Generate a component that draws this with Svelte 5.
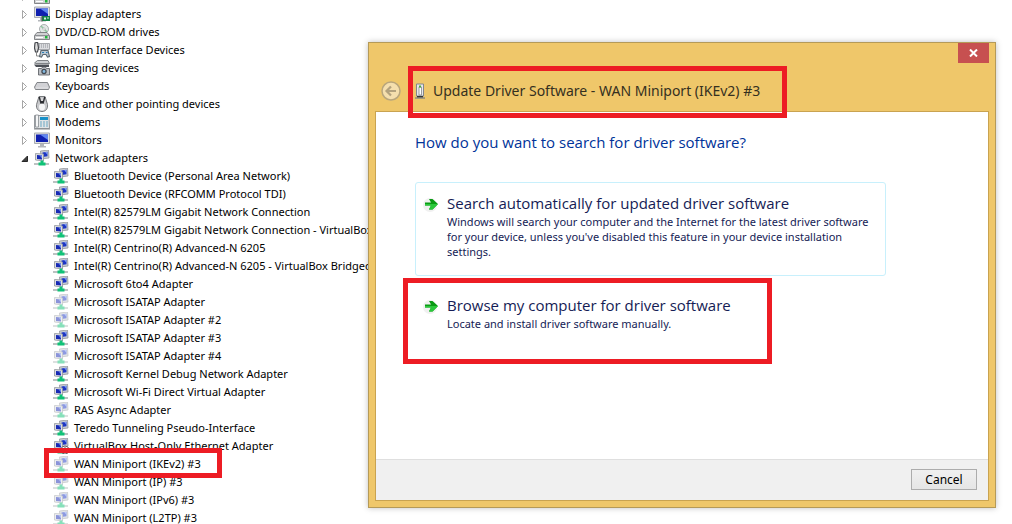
<script>
  const categories = [
    { name: 'Disk drives', icon: 'disk' },
    { name: 'Display adapters', icon: 'display' },
    { name: 'DVD/CD-ROM drives', icon: 'dvd' },
    { name: 'Human Interface Devices', icon: 'hid' },
    { name: 'Imaging devices', icon: 'imaging' },
    { name: 'Keyboards', icon: 'keyboard' },
    { name: 'Mice and other pointing devices', icon: 'mouse' },
    { name: 'Modems', icon: 'modem' },
    { name: 'Monitors', icon: 'monitor' },
    {
      name: 'Network adapters',
      icon: 'network',
      devices: [
        { name: 'Bluetooth Device (Personal Area Network)' },
        { name: 'Bluetooth Device (RFCOMM Protocol TDI)' },
        { name: 'Intel(R) 82579LM Gigabit Network Connection' },
        { name: 'Intel(R) 82579LM Gigabit Network Connection - VirtualBox' },
        { name: 'Intel(R) Centrino(R) Advanced-N 6205' },
        { name: 'Intel(R) Centrino(R) Advanced-N 6205 - VirtualBox Bridged' },
        { name: 'Microsoft 6to4 Adapter' },
        { name: 'Microsoft ISATAP Adapter', hidden: true },
        { name: 'Microsoft ISATAP Adapter #2', hidden: true },
        { name: 'Microsoft ISATAP Adapter #3' },
        { name: 'Microsoft ISATAP Adapter #4', hidden: true },
        { name: 'Microsoft Kernel Debug Network Adapter' },
        { name: 'Microsoft Wi-Fi Direct Virtual Adapter' },
        { name: 'RAS Async Adapter', hidden: true },
        { name: 'Teredo Tunneling Pseudo-Interface' },
        { name: 'VirtualBox Host-Only Ethernet Adapter', disabled: true },
        { name: 'WAN Miniport (IKEv2) #3', hidden: true, marked: true },
        { name: 'WAN Miniport (IP) #3', hidden: true },
        { name: 'WAN Miniport (IPv6) #3', hidden: true },
        { name: 'WAN Miniport (L2TP) #3', hidden: true }
      ]
    }
  ];

  let expanded = $state({ 'Network adapters': true });

  const toggle = (name) => {
    expanded[name] = !expanded[name];
  };
</script>

{#snippet arrow()}
  <svg class="go" viewBox="0 0 16 16" aria-hidden="true">
    <circle cx="7" cy="9" r="7" fill="#e9e9e9" opacity="0.7" />
    <path d="M2 6.500h6L6 3h3.500L15 8l-5.500 5.500H6l2-4H2z" fill="#0a9a14" />
    <path d="M2 8h13L9.500 13.500H6l2-4H2z" fill="#2ac83a" />
  </svg>
{/snippet}

{#snippet deviceIcon(kind, disabled = false)}
  <svg class="icon" viewBox="0 0 16 16" aria-hidden="true">
    {#if kind === 'network'}
      <path d="M6.500 1l8-1 .5 8-8 1z" fill="#c9ccd2" stroke="#92959c" stroke-width="0.8" />
      <path d="M8.500 2.500l5-.8v4.500l-5 .8z" fill="#1c35c4" />
      <path d="M11 2.100l2.500-.4v3z" fill="#7f9cf2" />
      <path d="M1.500 3.500l8 .5v7l-8-1z" fill="#dcdee2" stroke="#92959c" stroke-width="0.8" />
      <path d="M3 5l5 .4v4L3 8.900z" fill="#1729b4" />
      <path d="M5.500 5.200l2.500.2v3z" fill="#6d8df0" />
      <path d="M0 14h15" stroke="#bcc2c2" stroke-width="2" />
      <path d="M6.500 10.500h3V12.500h2v3h-7v-3h2z" fill="#10c277" />
      {#if disabled}
        <circle cx="12" cy="12" r="4" fill="#fff" stroke="#444" stroke-width="0.8" />
        <path d="M11.300 9.500h1.400v2.500h1.600L12 14.500 9.700 12h1.600z" fill="#111" />
      {/if}
    {:else if kind === 'monitor' || kind === 'display'}
      <path d="M.5 1h15v10.500H.5z" fill="#dfe1e3" stroke="#a9acb2" />
      <path d="M2 2.500h12v7.500H2z" fill="#1020b0" />
      <path d="M6 2.500h8v5.500z" fill="#5f86f0" />
      <path d="M6 12h4v2h2v1.500H4V14h2z" fill="#b4b7bb" />
      {#if kind === 'display'}
        <path d="M8 10h8v5H8z" fill="#168447" />
        <path d="M10 11.500h2v2h-2zM13 11.500h2v1h-2z" fill="#d4f0d9" />
        <path d="M8 9.500v6" stroke="#555" />
      {/if}
    {:else if kind === 'disk' || kind === 'dvd'}
      {#if kind === 'dvd'}
        <circle cx="10" cy="5" r="4.500" fill="#e2e8e6" stroke="#999da0" stroke-width="0.8" />
        <path d="M10 5L7 2M10 5l3 3" stroke="#8fc6a1" stroke-width="1.500" />
        <circle cx="10" cy="5" r="1.200" fill="#fff" stroke="#999" stroke-width="0.500" />
      {/if}
      <path d="M3 8.500h10l2.500 3v4H.5v-4z" fill="#d0d1d3" stroke="#77797d" stroke-width="0.900" />
      <path d="M1 11.500h14" stroke="#8e9094" />
      <path d="M2 13.500h7" stroke="#fff" />
      <path d="M11 12h2.500v2.500H11z" fill="#1fb638" />
    {:else if kind === 'hid'}
      <path d="M4 1.500h11.500v6H4z" fill="#dcdde0" stroke="#94979c" stroke-width="0.800" />
      <path d="M5 3h10M5 5h10" stroke="#8e9197" stroke-dasharray="1 1" />
      <path d="M1 1l2.500-1 1 6-1 4H1.500L.5 6z" fill="#ddd" stroke="#45484d" stroke-width="1.200" />
      <path d="M2.500 10v4h4" fill="none" stroke="#888" />
      <path d="M7 8.500h7l1.500 6-2 .5-1.500-2.500H9L7.500 15l-2-.5z" fill="#b9c8d3" stroke="#5b6770" stroke-width="1.100" />
      <path d="M8 10.500h2M12 10.500h1.500" stroke="#287db8" stroke-width="1.200" />
    {:else if kind === 'imaging'}
      <path d="M.5 3l3-2.500H14l1.500 3H2z" fill="#cdd0d3" stroke="#66696d" stroke-width="0.800" />
      <path d="M0 4.500h15v2.500H2z" fill="#4c5057" />
      <path d="M4.500 8.500h3l1-1.500h3l1 1.500h3v6.500h-11z" fill="#bcbfc4" stroke="#55585d" stroke-width="0.800" />
      <circle cx="10" cy="11.500" r="2.700" fill="#424850" />
      <circle cx="10" cy="11.500" r="1.400" fill="#83b9e0" />
    {:else if kind === 'keyboard'}
      <path d="M3 4.500h10.500l2 4.500-1 2.500h-13L.5 9z" fill="#c8c9cd" stroke="#77797e" stroke-width="0.900" />
      <path d="M3.500 6h9.500M2.500 8h11" stroke="#efeff1" stroke-dasharray="1 1" />
      <path d="M1.500 10h13" stroke="#ececee" />
    {:else if kind === 'mouse'}
      <path d="M5 .5h6l2.500 8c.5 4-1.500 7-5.500 7s-6-3-5.500-7z" fill="#c8c9cc" stroke="#6b6d71" stroke-width="0.900" />
      <path d="M4.500 1l2 7h3l2-7h-1.500l-1 4H7L6 1z" fill="#2b2d31" />
      <ellipse cx="8" cy="11" rx="3" ry="3.500" fill="#f5f5f6" />
      <path d="M7.500 2h1v3h-1z" fill="#e8e8e8" />
    {:else if kind === 'modem'}
      <path d="M.5 1.500H15l.5 13H.5z" fill="#e1e4e6" stroke="#8a8f94" stroke-width="0.900" />
      <path d="M1.500 1h3v12h-3z" fill="#f5f6f7" stroke="#868b90" stroke-width="0.800" />
      <path d="M6 3h8v3H6z" fill="#1991c9" />
      <path d="M6 8h8M6 10h8M6 12h8" stroke="#6aa8c4" stroke-dasharray="2 1" />
      <path d="M0 15h16" stroke="#85898d" />
    {/if}
  </svg>
{/snippet}

<main class="screen">
  <ul class="tree">
    {#each categories as category (category.name)}
      <li>
        <div class="row">
          <button
            class="twisty"
            aria-label="Toggle {category.name}"
            aria-expanded={!!expanded[category.name]}
            onclick={() => toggle(category.name)}
          >
            <svg viewBox="0 0 8 10" aria-hidden="true">
              {#if expanded[category.name]}
                <path d="M6.500 3v5.500H1z" fill="#404040" stroke="#262626" />
              {:else}
                <path d="M1.500 1.500v8l4-4z" fill="#fff" stroke="#a6a6a6" />
              {/if}
            </svg>
          </button>
          {@render deviceIcon(category.icon)}
          <span>{category.name}</span>
        </div>
        {#if category.devices && expanded[category.name]}
          <ul class="devices">
            {#each category.devices as device (device.name)}
              <li class="row" class:ghost={device.hidden}>
                {@render deviceIcon('network', device.disabled)}
                <span>{device.name}</span>
                {#if device.marked}<i class="mark mark-device"></i>{/if}
              </li>
            {/each}
          </ul>
        {/if}
      </li>
    {/each}
  </ul>

  <section class="dialog" role="dialog" aria-labelledby="wizard-title">
    <header>
      <button class="close" aria-label="Close">
        <svg viewBox="0 0 9 8" aria-hidden="true">
          <path d="M1 .5l7 7M8 .5l-7 7" stroke="#fff" stroke-width="2" />
        </svg>
      </button>
      <div class="caption">
        <button class="back" aria-label="Back" disabled>
          <svg viewBox="0 0 20 20" aria-hidden="true">
            <circle cx="10" cy="10" r="9" fill="#f5dfae" stroke="#b9a67c" stroke-width="1.500" />
            <path d="M15 10H6M10 5.500L5.500 10l4.500 4.500" fill="none" stroke="#b3a27e" stroke-width="2.200" />
          </svg>
        </button>
        <div class="title">
          <svg viewBox="0 0 10 16" aria-hidden="true">
            <path d="M1.500 1h7v12h-7z" fill="#e7e8eb" stroke="#83868d" />
            <path d="M4 4h2.500v8H4z" fill="#fff" stroke="#84868c" stroke-width="0.800" />
            <path d="M4 2.500h2v2H4z" fill="#4cad35" />
            <path d="M2 13h6v1.500H2z" fill="#33363b" />
            <path d="M0 15h10" stroke="#5e6f86" />
          </svg>
          <h1 id="wizard-title">Update Driver Software - WAN Miniport (IKEv2) #3</h1>
          <i class="mark mark-title"></i>
        </div>
      </div>
    </header>

    <div class="frame">
      <div class="body">
        <h2>How do you want to search for driver software?</h2>
        <button class="option outlined">
          {@render arrow()}
          <span class="label">
            <strong>Search automatically for updated driver software</strong>
            <span>Windows will search your computer and the Internet for the latest driver software for your device, unless you've disabled this feature in your device installation settings.</span>
          </span>
        </button>
        <button class="option">
          {@render arrow()}
          <span class="label">
            <strong>Browse my computer for driver software</strong>
            <span>Locate and install driver software manually.</span>
          </span>
          <i class="mark mark-option"></i>
        </button>
      </div>
      <footer>
        <button class="cancel">Cancel</button>
      </footer>
    </div>
  </section>
</main>

<style>
  :global(body) {
    margin: 0;
    background: #fff;
  }

  .screen {
    position: relative;
    height: 100vh;
    overflow: hidden;
    font: 11px/18px "Noto Sans", "Open Sans", sans-serif;
    color: #000;
  }

  button {
    font: inherit;
    color: inherit;
    padding: 0;
    border: 0;
    background: none;
  }

  svg {
    display: block;
    flex: none;
  }

  ul {
    list-style: none;
    margin: 0;
    padding: 0;
  }

  /* the list is scrolled part way through its first row */
  .tree {
    margin-top: -13px;
    padding-left: 21px;
  }

  .row {
    position: relative;
    display: flex;
    align-items: center;
    gap: 5px;
    height: 18px;
    white-space: nowrap;
  }

  .devices {
    padding-left: 32px;
  }

  .twisty {
    width: 8px;
  }

  .twisty svg {
    width: 8px;
    height: 10px;
  }

  .icon {
    width: 16px;
    height: 16px;
  }

  .ghost .icon {
    opacity: 0.5;
  }

  .mark {
    position: absolute;
    z-index: 1;
    border: 5px solid #ed1c24;
    pointer-events: none;
  }

  .mark-device {
    inset: -7px auto -5px -9px;
    width: 168px;
  }

  .mark-title {
    inset: -13px auto -15px -7px;
    width: 369px;
  }

  .mark-option {
    inset: -7px 113px -17px -13px;
  }

  .dialog {
    position: absolute;
    top: 42px;
    left: 368px;
    right: 16px;
    border: 1px solid #b59a58;
    padding: 0 6px 6px;
    background: #efc76a;
    box-shadow: 0 0 6px rgba(0, 0, 0, 0.25);
  }

  .close {
    display: grid;
    place-items: center;
    width: 31px;
    height: 20px;
    margin-left: auto;
    background: #c75050;
  }

  .close svg {
    width: 9px;
    height: 8px;
  }

  .caption {
    display: flex;
    align-items: center;
    gap: 14px;
    padding: 16px 6px 8px;
  }

  .back svg {
    width: 20px;
    height: 20px;
  }

  .title {
    position: relative;
    display: flex;
    align-items: center;
    gap: 8px;
    height: 24px;
  }

  .title svg {
    width: 10px;
    height: 16px;
  }

  h1 {
    margin: 0;
    font-size: 14px;
    font-weight: 400;
    color: #35301f;
    white-space: nowrap;
  }

  .frame {
    border: 1px solid #c9a350;
    background: #fff;
  }

  .body {
    padding: 19px 39px 111px;
  }

  h2,
  .label strong {
    font: 400 15px/22px "Open Sans", "Noto Sans", sans-serif;
  }

  h2 {
    margin: 0 0 29px;
    color: #003399;
  }

  .option {
    position: relative;
    display: flex;
    align-items: flex-start;
    gap: 8px;
    width: 100%;
    max-width: 471px;
    box-sizing: border-box;
    border: 1px solid transparent;
    border-radius: 3px;
    padding: 9px 8px 16px 7px;
    text-align: left;
    color: #151c55;
  }

  .option + .option {
    margin-top: 8px;
  }

  .outlined {
    border-color: #c8f0fc;
  }

  .go {
    width: 16px;
    height: 16px;
    margin-top: 4px;
  }

  .label {
    line-height: 15px;
  }

  .label strong {
    display: block;
  }

  footer {
    display: flex;
    justify-content: flex-end;
    padding: 9px 11px 10px;
    border-top: 1px solid #dfdfdf;
    background: #f0f0f0;
  }

  .cancel {
    width: 66px;
    height: 21px;
    border: 1px solid #acacac;
    background: linear-gradient(#f0f0f0, #e5e5e5);
    font-size: 12px;
    line-height: 18px;
  }
</style>
